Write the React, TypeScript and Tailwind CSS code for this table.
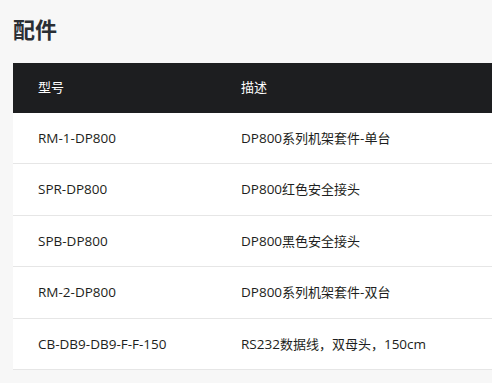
function Mixed({ text }: { text: string }) {
  const parts = text.split(/([\u3000-\u9fff\uff00-\uffef]+)/).filter((p) => p.length > 0);
  return (
    <>
      {parts.map((p, i) =>
        /[\u3000-\u9fff\uff00-\uffef]/.test(p) ? (
          <span key={i} className="text-[13px]">{p}</span>
        ) : (
          <span key={i} className="text-[13.5px]">{p}</span>
        )
      )}
    </>
  );
}

export default function App() {
  const rows = [
    ["RM-1-DP800", "DP800系列机架套件-单台"],
    ["SPR-DP800", "DP800红色安全接头"],
    ["SPB-DP800", "DP800黑色安全接头"],
    ["RM-2-DP800", "DP800系列机架套件-双台"],
    ["CB-DB9-DB9-F-F-150", "RS232数据线，双母头，150cm"],
  ];
  return (
    <div
      className="w-[492px] h-[383px] overflow-hidden bg-[#f7f7f7] pl-[13px]"
      style={{ fontFamily: '"Open Sans", "Noto Sans CJK SC", sans-serif' }}
    >
      <h2 className="pt-[14px] h-[63px] text-[22px] font-bold leading-[28px] text-[#2a2e33]" style={{ fontFamily: '"Noto Sans CJK SC", sans-serif' }}>
        配件
      </h2>
      <div className="w-[600px] bg-white">
        <div className="flex h-[50px] items-center bg-[#1d1e20] text-[13px] text-white">
          <div className="w-[203px] pl-[25px]">型号</div>
          <div className="pl-[25px]">描述</div>
        </div>
        {rows.map(([a, b], i) => (
          <div
            key={a}
            className={`flex ${i === 0 ? "h-[51px]" : "h-[51.5px]"} items-center border-b border-[#e6e6e6] text-[13px] text-[#1d1e20]`}
          >
            <div className="w-[203px] pl-[25px]"><Mixed text={a} /></div>
            <div className="pl-[25px]"><Mixed text={b} /></div>
          </div>
        ))}
      </div>
    </div>
  );
}
